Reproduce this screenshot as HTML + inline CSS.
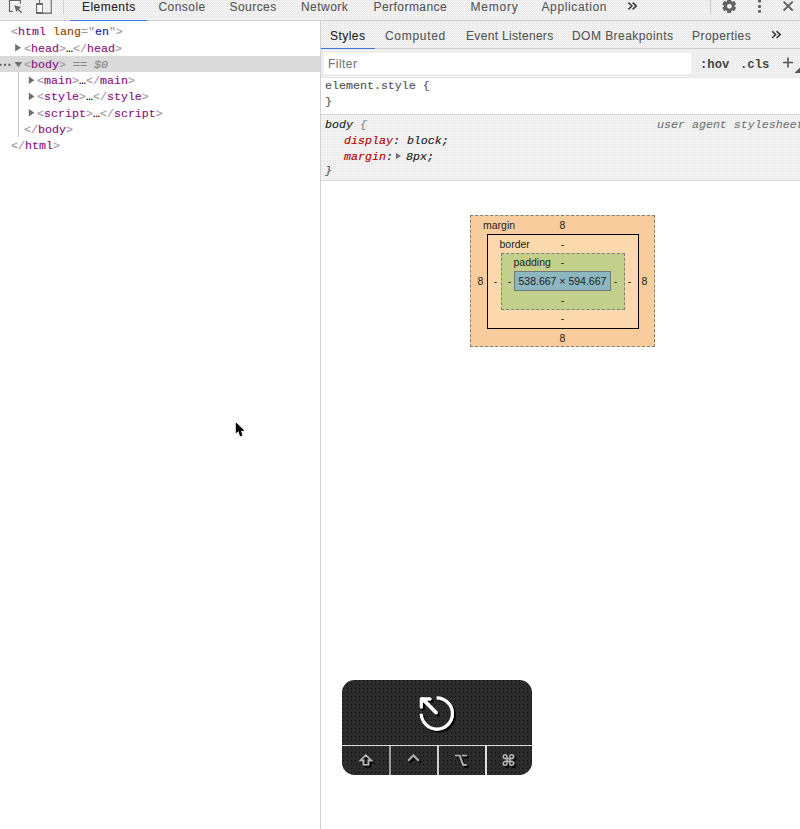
<!DOCTYPE html>
<html lang="en">
<head>
<meta charset="utf-8">
<style>
html,body{margin:0;padding:0;}
body{width:800px;height:829px;overflow:hidden;position:relative;background:#fff;font-family:"Liberation Sans",sans-serif;}
.a{position:absolute;}
.dots{background-color:#f2f2f2;background-image:repeating-conic-gradient(#e3e3e3 0 25%,transparent 0 100%);background-size:2px 2px;}
.ui{font-family:"Liberation Sans",sans-serif;font-size:12px;letter-spacing:0.45px;color:#555;white-space:nowrap;line-height:14px;-webkit-text-stroke:0.1px currentColor;}
.mono{font-family:"Liberation Mono",monospace;font-size:11.65px;white-space:nowrap;line-height:16px;-webkit-text-stroke:0.15px currentColor;}
#toolbar{left:0;top:0;width:800px;height:20px;border-bottom:1px solid #cdcdcd;}
#divider{left:320px;top:21px;width:1px;height:808px;background:#d0d0d0;}
.tg{color:#881280;}
.br{color:#a894a6;}
.an{color:#994500;}
.av{color:#1a1aa6;}
.tri{color:#6e6e6e;}
.bm{font-family:"Liberation Sans",sans-serif;font-size:10.5px;line-height:13px;color:#222;white-space:nowrap;}
.c{transform:translateX(-50%);}
</style>
</head>
<body>
<!-- top toolbar -->
<div id="toolbar" class="a dots"></div>
<div class="a" style="left:63px;top:0;width:1px;height:14px;background:#cfcfcf"></div>
<div class="a" style="left:710px;top:0;width:1px;height:14px;background:#cfcfcf"></div>
<div class="a ui" style="left:82px;top:0px;color:#222">Elements</div>
<div class="a" style="left:70px;top:19.8px;width:77px;height:1.4px;background:#3879d9"></div>
<div class="a ui" style="left:158.5px;top:0px">Console</div>
<div class="a ui" style="left:229.5px;top:0px">Sources</div>
<div class="a ui" style="left:301px;top:0px">Network</div>
<div class="a ui" style="left:373.5px;top:0px">Performance</div>
<div class="a ui" style="left:470.5px;top:0px;letter-spacing:0.8px">Memory</div>
<div class="a ui" style="left:541.5px;top:0px;letter-spacing:0.62px">Application</div>
<svg class="a" style="left:620px;top:0" width="20" height="14" viewBox="620 0 20 14"><path d="M628.4 2.6 L631.9 6 L628.4 9.4 M632.6 2.6 L636.2 6 L632.6 9.4" fill="none" stroke="#3a3a3a" stroke-width="1.6"/></svg>

<!-- left panel -->
<div id="divider" class="a"></div>
<div class="a" style="left:0;top:55.6px;width:320px;height:16px;background:#dadada"></div>
<div class="a mono" style="left:11px;top:24.2px"><span class="br">&lt;</span><span class="tg">html</span> <span class="an">lang</span><span class="br">="</span><span class="av">en</span><span class="br">"&gt;</span></div>
<div class="a mono" style="left:24px;top:40.5px"><span class="br">&lt;</span><span class="tg">head</span><span class="br">&gt;</span>…<span class="br">&lt;/</span><span class="tg">head</span><span class="br">&gt;</span></div>
<div class="a mono" style="left:24px;top:56.8px"><span class="br">&lt;</span><span class="tg">body</span><span class="br">&gt;</span> <span style="color:#888">== <i>$0</i></span></div>
<div class="a mono" style="left:37px;top:73.1px"><span class="br">&lt;</span><span class="tg">main</span><span class="br">&gt;</span>…<span class="br">&lt;/</span><span class="tg">main</span><span class="br">&gt;</span></div>
<div class="a mono" style="left:37px;top:89.4px"><span class="br">&lt;</span><span class="tg">style</span><span class="br">&gt;</span>…<span class="br">&lt;/</span><span class="tg">style</span><span class="br">&gt;</span></div>
<div class="a mono" style="left:37px;top:105.7px"><span class="br">&lt;</span><span class="tg">script</span><span class="br">&gt;</span>…<span class="br">&lt;/</span><span class="tg">script</span><span class="br">&gt;</span></div>
<div class="a mono" style="left:24px;top:122px"><span class="br">&lt;/</span><span class="tg">body</span><span class="br">&gt;</span></div>
<div class="a mono" style="left:11px;top:138.3px"><span class="br">&lt;/</span><span class="tg">html</span><span class="br">&gt;</span></div>


<!-- tree triangles -->
<svg class="a" style="left:0;top:40px" width="40" height="80" viewBox="0 40 40 80">
  <g fill="#6e6e6e">
    <path d="M15.2 44 L21 47.8 L15.2 51.6 Z"/>
    <path d="M14.6 62 L22.2 62 L18.4 67.3 Z"/>
    <path d="M28.8 76.4 L34.4 80.2 L28.8 84 Z"/>
    <path d="M28.8 92.6 L34.4 96.4 L28.8 100.2 Z"/>
    <path d="M28.8 108.9 L34.4 112.7 L28.8 116.5 Z"/>
  </g>
  <g fill="#5a5a5a"><rect x="-0.5" y="63.8" width="2" height="2"/><rect x="4" y="63.8" width="2" height="2"/><rect x="8.4" y="63.8" width="2" height="2"/></g>
</svg>
<div class="a" style="left:18px;top:72px;width:1px;height:65px;background:#c8c8d4"></div>



<!-- right panel -->
<div class="a dots" style="left:321px;top:21px;width:479px;height:27px;border-bottom:1px solid #cdcdcd"></div>
<div class="a" style="left:321px;top:47.6px;width:54px;height:1.6px;background:#3879d9"></div>
<div class="a ui" style="left:330px;top:29px;color:#222">Styles</div>
<div class="a ui" style="left:385px;top:29px;letter-spacing:0.7px">Computed</div>
<div class="a ui" style="left:466px;top:29px;letter-spacing:0.32px">Event Listeners</div>
<div class="a ui" style="left:572px;top:29px">DOM Breakpoints</div>
<div class="a ui" style="left:692px;top:29px">Properties</div>
<svg class="a" style="left:765px;top:26px" width="20" height="16" viewBox="765 26 20 16"><path d="M772.2 31.2 L775.6 34.6 L772.2 38 M776.6 31.2 L780.2 34.6 L776.6 38" fill="none" stroke="#3a3a3a" stroke-width="1.6"/></svg>

<div class="a dots" style="left:321px;top:49px;width:479px;height:28px;border-bottom:1px solid #e6e6e6"></div>
<div class="a" style="left:324px;top:53px;width:367px;height:20.8px;background:#fff"></div>
<div class="a ui" style="left:328px;top:57px;color:#777">Filter</div>
<!-- filter bar actions -->
<div class="a" style="left:700px;top:57.5px;font-family:'Liberation Mono',monospace;font-weight:bold;font-size:12.2px;line-height:14px;color:#444">:hov</div>
<div class="a" style="left:740px;top:57.5px;font-family:'Liberation Mono',monospace;font-weight:bold;font-size:12.2px;line-height:14px;color:#444">.cls</div>
<svg class="a" style="left:780px;top:54px" width="20" height="22" viewBox="780 54 20 22">
  <path d="M788 57.5 L788 67.5 M783 62.5 L793 62.5" stroke="#555" stroke-width="1.6"/>
  <path d="M800 67.5 L800 73 L794.5 73 Z" fill="#555"/>
</svg>

<div class="a" style="left:321px;top:114px;width:479px;height:65px;border-top:1px solid #d6d6d6;border-bottom:1px solid #d6d6d6;background-color:#ececec;background-image:repeating-conic-gradient(#fdfdfd 0 25%,transparent 0 100%);background-size:2px 2px"></div>
<div class="a mono" style="left:325px;top:78px;color:#555">element.style {</div>
<div class="a mono" style="left:325px;top:94px;color:#555">}</div>


<div class="a mono" style="left:325px;top:116.5px"><i style="color:#222">body</i> <i style="color:#888">{</i></div>
<div class="a mono" style="left:657px;top:116.5px;color:#777"><i>user agent stylesheet</i></div>
<div class="a mono" style="left:344px;top:132.5px"><i><span style="color:#b90000">display</span><span style="color:#222">: block;</span></i></div>
<div class="a mono" style="left:344px;top:148.5px"><i><span style="color:#b90000">margin</span><span style="color:#222">:</span></i></div>
<div class="a" style="left:396.3px;top:152.9px;width:0;height:0;border-left:5px solid #727272;border-top:3px solid transparent;border-bottom:3px solid transparent"></div>
<div class="a mono" style="left:406px;top:148.5px;color:#222"><i>8px;</i></div>
<div class="a mono" style="left:325px;top:163px;color:#555"><i>}</i></div>

<!-- box model -->
<div class="a" style="left:470px;top:215px;width:183px;height:130px;border:1px dashed #808080;background:#f9cc9d"></div>
<div class="a" style="left:487px;top:234px;width:150px;height:93px;border:1px solid #000;background:#fbd9ac"></div>
<div class="a" style="left:501px;top:253px;width:122px;height:55px;border:1px dashed #808080;background:#c3d08b"></div>
<div class="a" style="left:514px;top:271px;width:95px;height:18px;border:1px solid #777;background:#8cb6c0"></div>
<div class="bm a" style="left:483px;top:219px">margin</div>
<div class="bm a c" style="left:562.5px;top:219px">8</div>
<div class="bm a" style="left:499.5px;top:238px">border</div>
<div class="bm a c" style="left:562.5px;top:238px">-</div>
<div class="bm a" style="left:513.5px;top:256px">padding</div>
<div class="bm a c" style="left:562.5px;top:256px">-</div>
<div class="bm a" style="left:518.5px;top:275px">538.667 × 594.667</div>
<div class="bm a c" style="left:562.5px;top:294px">-</div>
<div class="bm a c" style="left:562.5px;top:312px">-</div>
<div class="bm a c" style="left:562.5px;top:331.5px">8</div>
<div class="bm a c" style="left:480.5px;top:275px">8</div>
<div class="bm a c" style="left:495.5px;top:275px">-</div>
<div class="bm a c" style="left:509.5px;top:275px">-</div>
<div class="bm a c" style="left:615.5px;top:275px">-</div>
<div class="bm a c" style="left:629.5px;top:275px">-</div>
<div class="bm a c" style="left:644.5px;top:275px">8</div>

<!-- key widget -->
<div class="a" id="kw" style="left:342px;top:679.5px;width:190px;height:95px;border-radius:12.5px;background-color:#2b2b2b;background-image:conic-gradient(from 270deg at 1px 1px,#0e0e0e 0 25%,transparent 0);background-size:4px 4px;background-position:1px 0;overflow:hidden">
  <div class="a" style="left:0;top:65px;width:190px;height:1px;background:#e0e0e0"></div>
  <div class="a" style="left:47px;top:66px;width:1.5px;height:29px;background:#a0a0a0"></div>
  <div class="a" style="left:95px;top:66px;width:1.5px;height:29px;background:#d0d0d0"></div>
  <div class="a" style="left:143px;top:66px;width:1.5px;height:29px;background:#e0e0e0"></div>
</div>
<svg class="a" style="left:342px;top:680px" width="190" height="95" viewBox="342 680 190 95">
  <defs>
    <filter id="sh" x="-30%" y="-30%" width="160%" height="160%"><feOffset dx="1.5" dy="1.5" in="SourceAlpha" result="o"/><feFlood flood-color="#000"/><feComposite in2="o" operator="in" result="s"/><feMerge><feMergeNode in="s"/><feMergeNode in="SourceGraphic"/></feMerge></filter>
    <filter id="sh2" x="-40%" y="-40%" width="180%" height="180%"><feOffset dx="1.6" dy="2" in="SourceAlpha" result="o"/><feFlood flood-color="#000"/><feComposite in2="o" operator="in" result="s"/><feMerge><feMergeNode in="s"/><feMergeNode in="SourceGraphic"/></feMerge></filter>
  </defs>
  <g filter="url(#sh)" fill="none" stroke="#fff">
    <path d="M436.6 697.9 A15.6 15.6 0 1 1 421.2 713.8" stroke-width="3.1"/>
    <path d="M436 712.4 L422.6 699" stroke-width="3.6" stroke-linecap="round"/>
    <path d="M430 698.8 L421.3 698.8 L421.3 707" stroke-width="3.2" stroke-linecap="round" stroke-linejoin="round"/>
  </g>
  <g filter="url(#sh2)" fill="none" stroke="#b4b4b4" stroke-width="1.6">
    <path d="M365.8 755 L360.3 760.4 L363.4 760.4 L363.4 764.8 L368.4 764.8 L368.4 760.4 L371.3 760.4 Z" stroke-linejoin="miter"/>
    <path d="M408.6 760.2 L413.4 755.4 L418.2 760.2" stroke-width="1.9" stroke-linecap="round"/>
    <path d="M455 755.5 L459.7 755.5 L463 764.9 L466.8 764.9 M461.8 755.5 L466.8 755.5" stroke-width="1.7"/>
    <path d="M507.0 756.6 L507.0 763.4 A1.9 1.9 0 1 1 505.1 761.5 L511.7 761.5 A1.9 1.9 0 1 1 509.8 763.4 L509.8 756.6 A1.9 1.9 0 1 1 511.7 758.5 L505.1 758.5 A1.9 1.9 0 1 1 507.0 756.6 Z" stroke-width="1.4"/>
  </g>
</svg>

<!-- cursor -->
<svg class="a" style="left:232px;top:419px" width="16" height="22" viewBox="0 0 16 22">
  <path d="M4.2 4.1 L4.2 13.8 L6.7 11.7 L8.3 16.9 L10 16.3 L8.6 11.6 L11.8 11.4 Z" fill="none" stroke="#e6e6e6" stroke-width="3.2" stroke-linejoin="round" opacity="0.6"/><path d="M4.2 4.1 L4.2 13.8 L6.7 11.7 L8.3 16.9 L10 16.3 L8.6 11.6 L11.8 11.4 Z" fill="#000" stroke="#fff" stroke-width="1.2" stroke-linejoin="round" paint-order="stroke"/><path d="M4.2 4.1 L4.2 13.8 L6.7 11.7 L8.3 16.9 L10 16.3 L8.6 11.6 L11.8 11.4 Z" fill="#000" stroke="#000" stroke-width="0.5" stroke-linejoin="round"/>
</svg>

<!-- toolbar icons -->
<svg class="a" style="left:0;top:0" width="70" height="20" viewBox="0 0 70 20">
  <g fill="#666">
    <rect x="8.9" y="0" width="1.2" height="11.9"/>
    <rect x="8.9" y="0" width="12" height="1"/>
    <rect x="19.9" y="0" width="1.1" height="3.8"/>
    <rect x="8.9" y="10.8" width="3.9" height="1.2"/>
    <path d="M14.2 5.2 L21 7.1 L16.3 11.8 Z"/>
    <rect x="39" y="0" width="1.1" height="3.2"/>
    <rect x="36.1" y="3" width="6.8" height="10.75"/>
    <rect x="50.7" y="0" width="1.1" height="13.75"/>
    <rect x="36.1" y="12.5" width="15.7" height="1.25"/>
  </g>
  <path d="M17.6 8.7 L21.7 12.7" stroke="#666" stroke-width="1.4"/>
  <rect x="37.2" y="5" width="5" height="7" fill="#fafafa"/>
</svg>
<svg class="a" style="left:712px;top:0" width="88" height="20" viewBox="712 0 88 20">
  <g fill="#616161">
    <circle cx="729.2" cy="6.1" r="5.3"/>
    <rect x="727.30" y="-0.60" width="3.8" height="13.4" transform="rotate(0 729.2 6.1)"/><rect x="727.30" y="-0.60" width="3.8" height="13.4" transform="rotate(60 729.2 6.1)"/><rect x="727.30" y="-0.60" width="3.8" height="13.4" transform="rotate(120 729.2 6.1)"/><rect x="727.30" y="-0.60" width="3.8" height="13.4" transform="rotate(180 729.2 6.1)"/><rect x="727.30" y="-0.60" width="3.8" height="13.4" transform="rotate(240 729.2 6.1)"/><rect x="727.30" y="-0.60" width="3.8" height="13.4" transform="rotate(300 729.2 6.1)"/>
  </g>
  <circle cx="729.4" cy="6.3" r="2.4" fill="#f8f8f8"/>
  <g fill="#616161"><rect x="758" y="-0.3" width="3" height="2.8" rx="0.8"/><rect x="758" y="5.1" width="3" height="2.8" rx="0.8"/><rect x="758" y="10" width="3" height="2.8" rx="0.8"/></g>
  <path d="M783.6 1.6 L792.7 10.5 M792.7 1.6 L783.6 10.5" stroke="#616161" stroke-width="1.8"/>
</svg>
</body>
</html>
